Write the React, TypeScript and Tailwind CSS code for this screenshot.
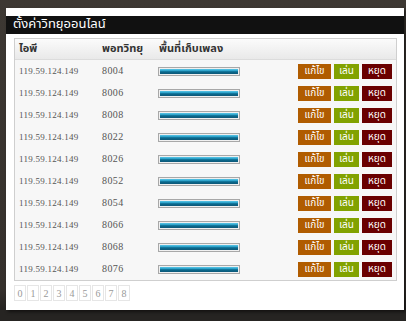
import React from "react";

const ports = ["8004", "8006", "8008", "8022", "8026", "8052", "8054", "8066", "8068", "8076"];
const pages = ["0", "1", "2", "3", "4", "5", "6", "7", "8"];

const thai = { fontFamily: '"Noto Sans Thai", "Noto Sans", "DejaVu Sans", sans-serif' };
const serif = { fontFamily: '"Liberation Serif", "Times New Roman", serif' };

function Bar() {
  return (
    <div className="h-[9px] w-[82px] border border-[#a8a8a8] bg-[#f0f0f0] p-px">
      <div className="h-full w-full bg-[linear-gradient(#5cc8e8_0%,#2aa0c8_35%,#0b6a8e_55%,#0d5878_100%)]" />
    </div>
  );
}

export default function App() {
  return (
    <div className="h-[321px] w-[406px] overflow-hidden bg-[linear-gradient(#3d3833,#35302c_90%,#262422_96%)]">
      <div className="flex h-[8px] justify-end pr-[24px]">
        <span className="-mt-[10px] text-[12px] font-bold leading-[13px] text-[#e08a10]" style={thai}>
          ออกจากระบบ
        </span>
      </div>
      <div className="ml-[6px] h-[302px] w-[398px] bg-white pt-[8px] shadow-[2px_2px_3px_rgba(0,0,0,0.5)]">
        <div className="flex h-[18px] items-center bg-[#111111] pl-[7px] text-[13px] text-white" style={thai}>
          ตั้งค่าวิทยุออนไลน์
        </div>
        <div className="mx-[8px] mt-[4px] w-[383px] border border-[#cfcfcf] bg-[#f7f7f7]">
          <div
            className="flex h-[21px] items-center border-b border-[#dcdcdc] bg-[linear-gradient(#fbfbfb,#e9e9e9)] text-[11px] font-bold text-[#333]"
            style={thai}
          >
            <span className="w-[87px] pl-[4px]">ไอพี</span>
            <span className="w-[57px]">พอทวิทยุ</span>
            <span>พื้นที่เก็บเพลง</span>
          </div>
          {ports.map((p) => (
            <div key={p} className="flex h-[22px] items-center text-[10px] font-normal text-[#555]">
              <span className="w-[87px] pl-[4px] text-[9px] leading-[22px] tracking-[0.25px]" style={serif}>
                119.59.124.149
              </span>
              <span className="w-[56px] leading-[22px] tracking-[0.4px]" style={serif}>
                {p}
              </span>
              <Bar />
              <div className="ml-auto flex gap-[3px] pr-[4px] text-[10px] text-white" style={thai}>
                <span className="flex h-[15px] w-[33px] items-center justify-center bg-[#b05c00]">แก้ไข</span>
                <span className="flex h-[15px] w-[25px] items-center justify-center bg-[#82a200]">เล่น</span>
                <span className="flex h-[15px] w-[30px] items-center justify-center bg-[#6a0000]">หยุด</span>
              </div>
            </div>
          ))}
        </div>
        <div className="mx-[8px] mt-[4px] flex gap-px">
          {pages.map((n) => (
            <span
              key={n}
              className="flex h-[16px] w-[12px] items-center justify-center border border-[#e6e6e6] text-[10px] text-[#999]"
              style={serif}
            >
              {n}
            </span>
          ))}
        </div>
      </div>
    </div>
  );
}
